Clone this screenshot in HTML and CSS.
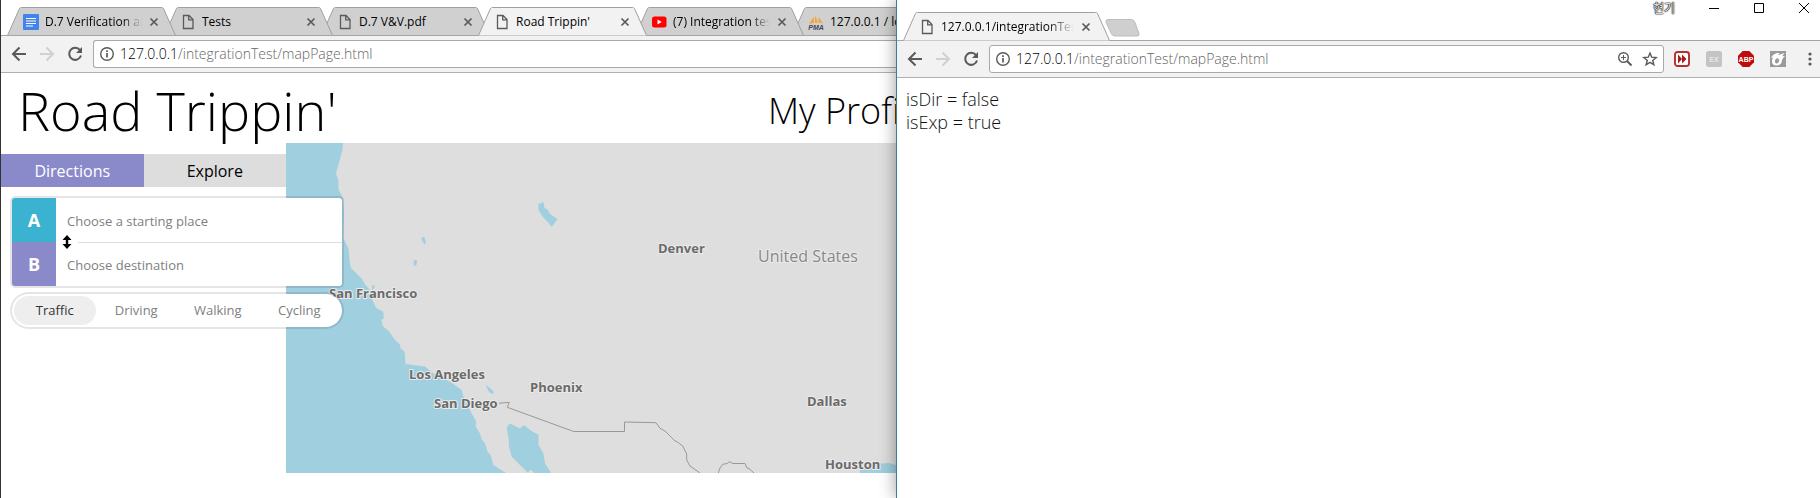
FILE: index.html
```
<!DOCTYPE html>
<html lang="en">
<head>
<meta charset="utf-8">
<title>Road Trippin'</title>
<link rel="stylesheet" href="styles.css">
</head>
<body>
<svg class="defs" aria-hidden="true">
  <symbol id="tab" viewBox="0 0 169 29"><path d="M0.5 28.5L12.500 1.500Q13 .5 14.500 .5H154.500Q156 .5 156.500 1.500L168.500 28.500"/></symbol>
  <symbol id="page" viewBox="0 0 16 16"><path d="M3.500 1.500h5.500l4 4v9h-9.500zM8.700 1.500v4.300h4.300" fill="none" stroke="#5a5a5a" stroke-width="1.300"/></symbol>
  <symbol id="close" viewBox="0 0 10 10"><path d="M1.500 1.500l7 7M8.500 1.500l-7 7" stroke="#5a5a5a" stroke-width="1.700"/></symbol>
  <symbol id="back" viewBox="0 0 16 16"><path d="M15 8H2.500M8.500 1.500L2 8l6.500 6.500" fill="none" stroke="currentColor" stroke-width="2"/></symbol>
  <symbol id="reload" viewBox="0 0 16 16"><path d="M13 4.200A6 6 0 1 0 14 9.500" fill="none" stroke="currentColor" stroke-width="2"/><path d="M15 1v6H9z" fill="currentColor"/></symbol>
  <symbol id="info" viewBox="0 0 16 16"><circle cx="8" cy="8" r="6.300" fill="none" stroke="#5a5a5a" stroke-width="1.400"/><path d="M8 7v4.500M8 4.300v1.700" stroke="#5a5a5a" stroke-width="1.700"/></symbol>
</svg>

<section class="window left" aria-label="Road Trippin' window">
  <nav class="tabs">
    <div class="tab"><svg class="shape"><use href="#tab"/></svg>
      <svg class="ico" viewBox="0 0 16 16"><rect width="16" height="16" rx="1" fill="#4384ea"/><path d="M3 4.500h10M3 7h10M3 9.500h10M3 12h7" stroke="#fff" stroke-width="1.200"/></svg>
      <span class="name fade">D.7 Verification and</span><button aria-label="Close tab"><svg><use href="#close"/></svg></button></div>
    <div class="tab"><svg class="shape"><use href="#tab"/></svg><svg class="ico"><use href="#page"/></svg><span class="name">Tests</span><button aria-label="Close tab"><svg><use href="#close"/></svg></button></div>
    <div class="tab"><svg class="shape"><use href="#tab"/></svg><svg class="ico"><use href="#page"/></svg><span class="name">D.7 V&amp;V.pdf</span><button aria-label="Close tab"><svg><use href="#close"/></svg></button></div>
    <div class="tab active"><svg class="shape"><use href="#tab"/></svg><svg class="ico"><use href="#page"/></svg><span class="name">Road Trippin'</span><button aria-label="Close tab"><svg><use href="#close"/></svg></button></div>
    <div class="tab"><svg class="shape"><use href="#tab"/></svg>
      <svg class="ico" viewBox="0 0 16 16"><rect x="1" y="2.500" width="14.500" height="11" rx="2.500" fill="#f00"/><path d="M6.500 5.500v5l4.300-2.500z" fill="#fff"/></svg>
      <span class="name fade">(7) Integration testing</span><button aria-label="Close tab"><svg><use href="#close"/></svg></button></div>
    <div class="tab"><svg class="shape"><use href="#tab"/></svg>
      <svg class="ico" viewBox="0 0 16 16"><path d="M1 9.500L6 3v6zM7 9V1l3 7.500zM10.500 8.500V3L15 9.500z" fill="#f8a33a"/><text x="8" y="15.500" text-anchor="middle" class="pma">PMA</text></svg>
      <span class="name">127.0.0.1 / localhost</span></div>
  </nav>
  <div class="toolbar">
    <button class="nav" aria-label="Back"><svg><use href="#back"/></svg></button>
    <button class="nav off" aria-label="Forward"><svg><use href="#back"/></svg></button>
    <button class="nav" aria-label="Reload"><svg><use href="#reload"/></svg></button>
    <div class="omnibox"><svg><use href="#info"/></svg><span class="url">127.0.0.1<i>/integrationTest/mapPage.html</i></span></div>
  </div>
  <header class="site-header"><h1>Road Trippin'</h1><a href="#profile">My Profile</a></header>
  <main class="planner">
    <div class="sidebar">
      <div class="modes"><button class="on">Directions</button><button>Explore</button></div>
      <form class="directions">
        <div class="inputs">
          <label class="row"><b class="a">A</b><input type="text" aria-label="Start" placeholder="Choose a starting place"></label>
          <label class="row"><b class="b">B</b><input type="text" aria-label="Destination" placeholder="Choose destination"></label>
          <button type="button" class="swap" aria-label="Swap"><svg viewBox="0 0 10 14"><path d="M5 0l4.500 5H6.200v4h3.300L5 14 .5 9h3.300V5H.5z"/></svg></button>
        </div>
        <div class="profiles">
          <label><input type="radio" name="profile" checked><span>Traffic</span></label>
          <label><input type="radio" name="profile"><span>Driving</span></label>
          <label><input type="radio" name="profile"><span>Walking</span></label>
          <label><input type="radio" name="profile"><span>Cycling</span></label>
        </div>
      </form>
    </div>
    <svg class="map" viewBox="0 0 610 330" preserveAspectRatio="xMinYMin slice" role="img" aria-label="Map of the United States">
      <g class="water">
        <path d="M0 0H57L56.500 7 50 30.500 52.300 37 52.700 47 57.300 55.500 58 72 57.500 95.500 62.500 105.500 63.700 119 65 125 75.500 135.500 79.500 142 85.700 149V155.500L90 164.700 97.300 168.700 97.700 175.500 95.500 177 96.700 183 103.500 189 109 197 114 201.500 114.500 205.500 118.700 208.700 119.500 221 139 223.500 147.500 230.500 164 238.700 175.700 247 177.500 253.700 185.700 270.500 190 278 189.700 283.700 194 290.500 195.500 296 199 300.500 201.500 308.700 204.700 312 207.300 322 220 330H0z"/>
        <path d="M220.700 285.500L222 282 224.700 280.500 229 283 234 285.500 237 282.500 239 282.700 244 287 252.500 292V302L257.500 310.500 259 320.500 262 325 265 330H248L244.700 326.500 242 330 234 322 225.700 313.700 223 303.700 222.700 295.500z"/>
        <path d="M252.300 61.300L257.300 59 258.500 65 262 67 264 71 271.700 76.300 265.700 83.700 260.700 78 257 74 252.500 67z"/>
        <path d="M135 95.500L138 93.500 140 99 138.500 101.500zM127.500 117.500L131 117 130.500 122 128 123zM199.700 242L202.500 243.700 207.300 248V251.500L203 249zM86 142.500h3l-1.500 4h-1.500z"/>
        <path d="M574 330V326L594 320.500 603 320 610 322V330z"/>
      </g>
      <path class="border" d="M213 260.300L223.300 259.300 221.300 264.300 287.700 288.500H338.500V279L370 279.700 374 285.300 379 288 389 298 391.500 299 396.700 303 400.700 311V317L404 323 414 330M432.300 330L434 325 436.700 321.300 441 320.500 443.300 318.700 447 320.500H459L461 325 463 325.500 468 330"/>
      <g class="city">
        <text x="43" y="155">San Francisco</text><text x="123" y="236">Los Angeles</text><text x="148" y="265">San Diego</text><text x="244" y="249">Phoenix</text><text x="372" y="110">Denver</text><text x="521" y="263">Dallas</text><text x="539" y="326">Houston</text>
      </g>
      <text class="country" x="472" y="119">United States</text>
    </svg>
  </main>
</section>

<section class="window right" aria-label="Test output window">
  <div class="caption"><span class="user">현기</span>
    <button aria-label="Minimize"><svg viewBox="0 0 12 12"><path d="M1 6.500h10"/></svg></button>
    <button aria-label="Maximize"><svg viewBox="0 0 12 12"><path d="M1.500 1.500h9v9h-9z"/></svg></button>
    <button aria-label="Close"><svg viewBox="0 0 12 12"><path d="M1 1l10 10M11 1L1 11"/></svg></button>
  </div>
  <nav class="tabs">
    <div class="tab active wide"><svg class="shape" viewBox="0 0 207 29" preserveAspectRatio="none"><path d="M.5 28.500L12.500 1.500Q13 .5 14.500 .5H192.500Q194 .5 194.500 1.500L206.500 28.500"/></svg><svg class="ico"><use href="#page"/></svg><span class="name fade">127.0.0.1/integrationTest</span><button aria-label="Close tab"><svg><use href="#close"/></svg></button></div>
    <button class="new-tab" aria-label="New tab"><svg viewBox="0 0 35 18"><path d="M3 .5h23q3 0 4 3l4 11q.5 2.500-2 2.500H10q-3 0-4-3L1 3Q.5.500 3 .5z"/></svg></button>
  </nav>
  <div class="toolbar">
    <button class="nav" aria-label="Back"><svg><use href="#back"/></svg></button>
    <button class="nav off" aria-label="Forward"><svg><use href="#back"/></svg></button>
    <button class="nav" aria-label="Reload"><svg><use href="#reload"/></svg></button>
    <div class="omnibox"><svg><use href="#info"/></svg><span class="url">127.0.0.1<i>/integrationTest/mapPage.html</i></span>
      <button aria-label="Zoom"><svg viewBox="0 0 16 16" fill="none" stroke="#5a5a5a"><circle cx="6.500" cy="6.500" r="4.800" stroke-width="1.400"/><path d="M10 10l4.500 4.500" stroke-width="2"/><path d="M4 6.500h5M6.500 4v5"/></svg></button>
      <button aria-label="Bookmark"><svg viewBox="0 0 16 16" fill="none" stroke="#5a5a5a" stroke-width="1.400"><path d="M8 2l1.700 4.200 4.500.3-3.500 2.900 1.200 4.400L8 11.400l-3.900 2.400 1.200-4.400L1.800 6.500l4.500-.3z"/></svg></button>
    </div>
    <div class="extensions">
      <button aria-label="Fast forward"><svg viewBox="0 0 16 16"><rect x="1" y="1" width="14" height="14" rx="2.500" fill="#fff" stroke="#b5302c" stroke-width="1.900"/><path d="M4 3.500l4 4.500-4 4.500zM8 3.500l4.500 4.500L8 12.500z" fill="#a81d1a"/></svg></button>
      <button aria-label="EX"><svg viewBox="0 0 16 16"><rect width="16" height="16" rx="2.500" fill="#c4c4c4"/><text x="8" y="11" text-anchor="middle" class="badge dim">EX</text></svg></button>
      <button aria-label="Adblock Plus"><svg viewBox="0 0 16 16"><path d="M4.700 0h6.600L16 4.700v6.600L11.300 16H4.700L0 11.300V4.700z" fill="#c00b0b"/><text x="8" y="10.500" text-anchor="middle" class="badge">ABP</text></svg></button>
      <button aria-label="Flame"><svg viewBox="0 0 16 16"><rect width="16" height="16" fill="#9a9a9a"/><path d="M1 7.500C2 4 5 2 9.500 2L8 4.200 14.500 2l-2.300 3.200 2.800-.2c-2 1.500-3 3-3.200 5.500C11.500 13 9.500 14.500 6.500 14.500S2 13 2 10.500c0-1.700.4-3 1.500-4.300C2.500 6.300 2 6.700 1 7.500z" fill="#fff"/><ellipse cx="7" cy="9.800" rx="2" ry="2.600" transform="rotate(25 7 9.800)" fill="#9a9a9a"/></svg></button>
      <button aria-label="Menu"><svg viewBox="0 0 16 16" fill="#5a5a5a"><circle cx="8" cy="3" r="1.600"/><circle cx="8" cy="8" r="1.600"/><circle cx="8" cy="13" r="1.600"/></svg></button>
    </div>
  </div>
  <div class="output"><p>isDir = false</p><p>isExp = true</p></div>
</section>
</body>
</html>
```
FILE: styles.css
```
* { box-sizing: border-box; }
body {
  margin: 0;
  min-height: 100vh;
  display: grid;
  grid-template-columns: 64fr 66fr;
  background: #fff;
  color: #000;
  font-family: "Open Sans", "Noto Sans CJK KR", sans-serif;
  font-weight: 350;
  overflow-x: hidden;
}
button { font: inherit; border: 0; padding: 0; background: none; color: inherit; display: block; }
svg { display: block; }
.defs { position: absolute; width: 0; height: 0; }
.window { min-width: 0; background: #fff; }
.left { border-left: 1px solid #333; padding-top: 7px; overflow: hidden; }
.right { border-left: 1px solid #3b7d99; position: relative; z-index: 20; box-shadow: 0 0 16px rgba(0, 0, 0, .4); }

/* Tab strip */
.tabs { display: flex; height: 29px; padding-left: 6px; position: relative; }
.tabs::after { content: ""; position: absolute; left: 0; right: 0; bottom: 0; height: 1px; background: #a5a5a5; z-index: 7; }
.tab {
  position: relative;
  flex: none;
  width: 169px;
  margin-right: -12px;
  padding: 0 17px 0 16px;
  display: flex;
  align-items: center;
  font-size: 12px;
  font-weight: 400;
}
.tab:nth-child(1) { z-index: 6; }
.tab:nth-child(2) { z-index: 5; }
.tab:nth-child(3) { z-index: 4; }
.tab:nth-child(5) { z-index: 2; }
.tab:nth-child(6) { z-index: 1; }
.tab.active { z-index: 8; }
.tab.wide { width: 207px; margin-right: -5px; padding-right: 19px; }
.shape { position: absolute; left: 0; top: 0; width: 100%; height: 29px; z-index: -1; fill: #d0d0d0; stroke: #a0a0a0; }
.active .shape { fill: #f2f2f2; }
.ico { width: 16px; height: 16px; flex: none; margin-right: 6px; }
.name { flex: 1; overflow: hidden; white-space: nowrap; line-height: 20px; }
.fade { mask-image: linear-gradient(90deg, #000 80%, transparent); }
.tab button { margin-left: 7px; }
.tab button svg { width: 10px; height: 10px; }
.pma { font: italic bold 7px "Liberation Sans", sans-serif; fill: #44445e; }
.new-tab svg { width: 35px; height: 18px; fill: #cfcfcf; stroke: #bdbdbd; }
.new-tab { margin-top: 3px; }

/* Toolbar */
.toolbar { display: flex; align-items: center; height: 37px; padding-left: 10px; background: #f2f2f2; border-bottom: 1px solid #b0b0b0; }
.nav { width: 16px; margin-right: 12px; color: #5a5a5a; }
.nav svg { width: 16px; height: 16px; }
.off { color: #d0d0d0; transform: scaleX(-1); }
.omnibox {
  flex: 1;
  min-width: 0;
  height: 28px;
  margin-left: -2px;
  padding: 0 5px;
  display: flex;
  align-items: center;
  gap: 5px;
  background: #fff;
  border: 1px solid #a9a9a9;
  border-radius: 3px;
}
.omnibox svg { width: 16px; height: 16px; flex: none; }
.omnibox button + button { margin: 0 0 0 4px; }
.left .omnibox { border-right: 0; border-radius: 3px 0 0 3px; }
.url { flex: 1; font-size: 14px; font-weight: 300; line-height: 20px; white-space: nowrap; }
.url i { font-style: normal; color: #666; }
.extensions { display: flex; gap: 16px; padding: 0 2px 0 10px; }
.extensions svg { width: 16px; height: 16px; }
.badge { font: bold 7px "Liberation Sans", sans-serif; fill: #fff; }
.dim { fill: #e8e8e8; }

/* Window caption */
.caption { display: flex; justify-content: flex-end; align-items: flex-start; height: 12px; gap: 33px; padding: 2px 10px 0 0; }
.caption svg { width: 12px; height: 12px; fill: none; stroke: #000; }
.user { font-size: 12px; line-height: 14px; color: #fff; text-shadow: 0 0 1px #000, 0 0 1px #000, 0 0 1px #000, 0 0 2px #333; }

/* Site */
.site-header { display: flex; justify-content: space-between; height: 70px; padding-left: 17px; white-space: nowrap; }
.site-header h1 { margin: 0; font-size: 54px; font-weight: 350; line-height: 74px; }
.site-header a { flex: none; width: 128px; font-size: 36px; font-weight: 300; line-height: 76px; color: #000; text-decoration: none; }
.planner { display: flex; }
.sidebar { width: 285px; flex: none; padding-top: 11px; position: relative; z-index: 2; }
.modes { display: flex; height: 33px; }
.modes button { flex: 1; background: #ddd; font-size: 16px; font-weight: 400; line-height: 35px; }
.modes .on { background: #8a8acb; color: #fff; }
.directions { width: 330px; margin: 11px 0 0 11px; }
.inputs { position: relative; background: #fff; border-radius: 3px; box-shadow: 0 0 0 2px rgba(0, 0, 0, .1); }
.row { display: flex; height: 44px; }
.row b { width: 44px; text-align: center; font-size: 18px; font-weight: 700; line-height: 44px; color: #fff; }
.a { background: #3bb2d0; border-radius: 3px 0 0 0; }
.b { background: #8a8acb; border-radius: 0 0 0 3px; }
.row input { flex: 1; min-width: 0; border: 0; background: none; padding: 2px 11px 0; font: inherit; font-size: 13px; font-weight: 400; outline: 0; }
.row input::placeholder, .profiles { color: #808080; }
.inputs::after { content: ""; position: absolute; left: 66px; right: 0; top: 44px; height: 1px; background: #ddd; }
.swap { position: absolute; left: 50px; top: 37px; }
.swap svg { width: 10px; height: 14px; }
.profiles { display: flex; margin-top: 8px; padding: 2px; background: #fff; border-radius: 17px; box-shadow: 0 0 0 2px rgba(0, 0, 0, .1); }
.profiles label { flex: 1; position: relative; }
.profiles input { position: absolute; opacity: 0; margin: 0; }
.profiles span { display: block; height: 29px; line-height: 28px; border-radius: 15px; font-size: 13px; font-weight: 400; text-align: center; }
.profiles :checked + span { background: #eee; color: #333; }
.map { flex: 1; min-width: 0; height: 330px; background: #dedede; }
.water { fill: #a0cfdf; }
.border { fill: none; stroke: #999; }
.city { font-size: 13px; font-weight: 700; fill: #6b6b6b; }
.country { font-size: 16px; font-weight: 400; fill: #888; }
.map text { stroke: #eaeaea; stroke-width: 2px; paint-order: stroke; }

.output { padding: 10px 9px; font-size: 18px; line-height: 23px; color: #111; }
.output p { margin: 0; }
```
